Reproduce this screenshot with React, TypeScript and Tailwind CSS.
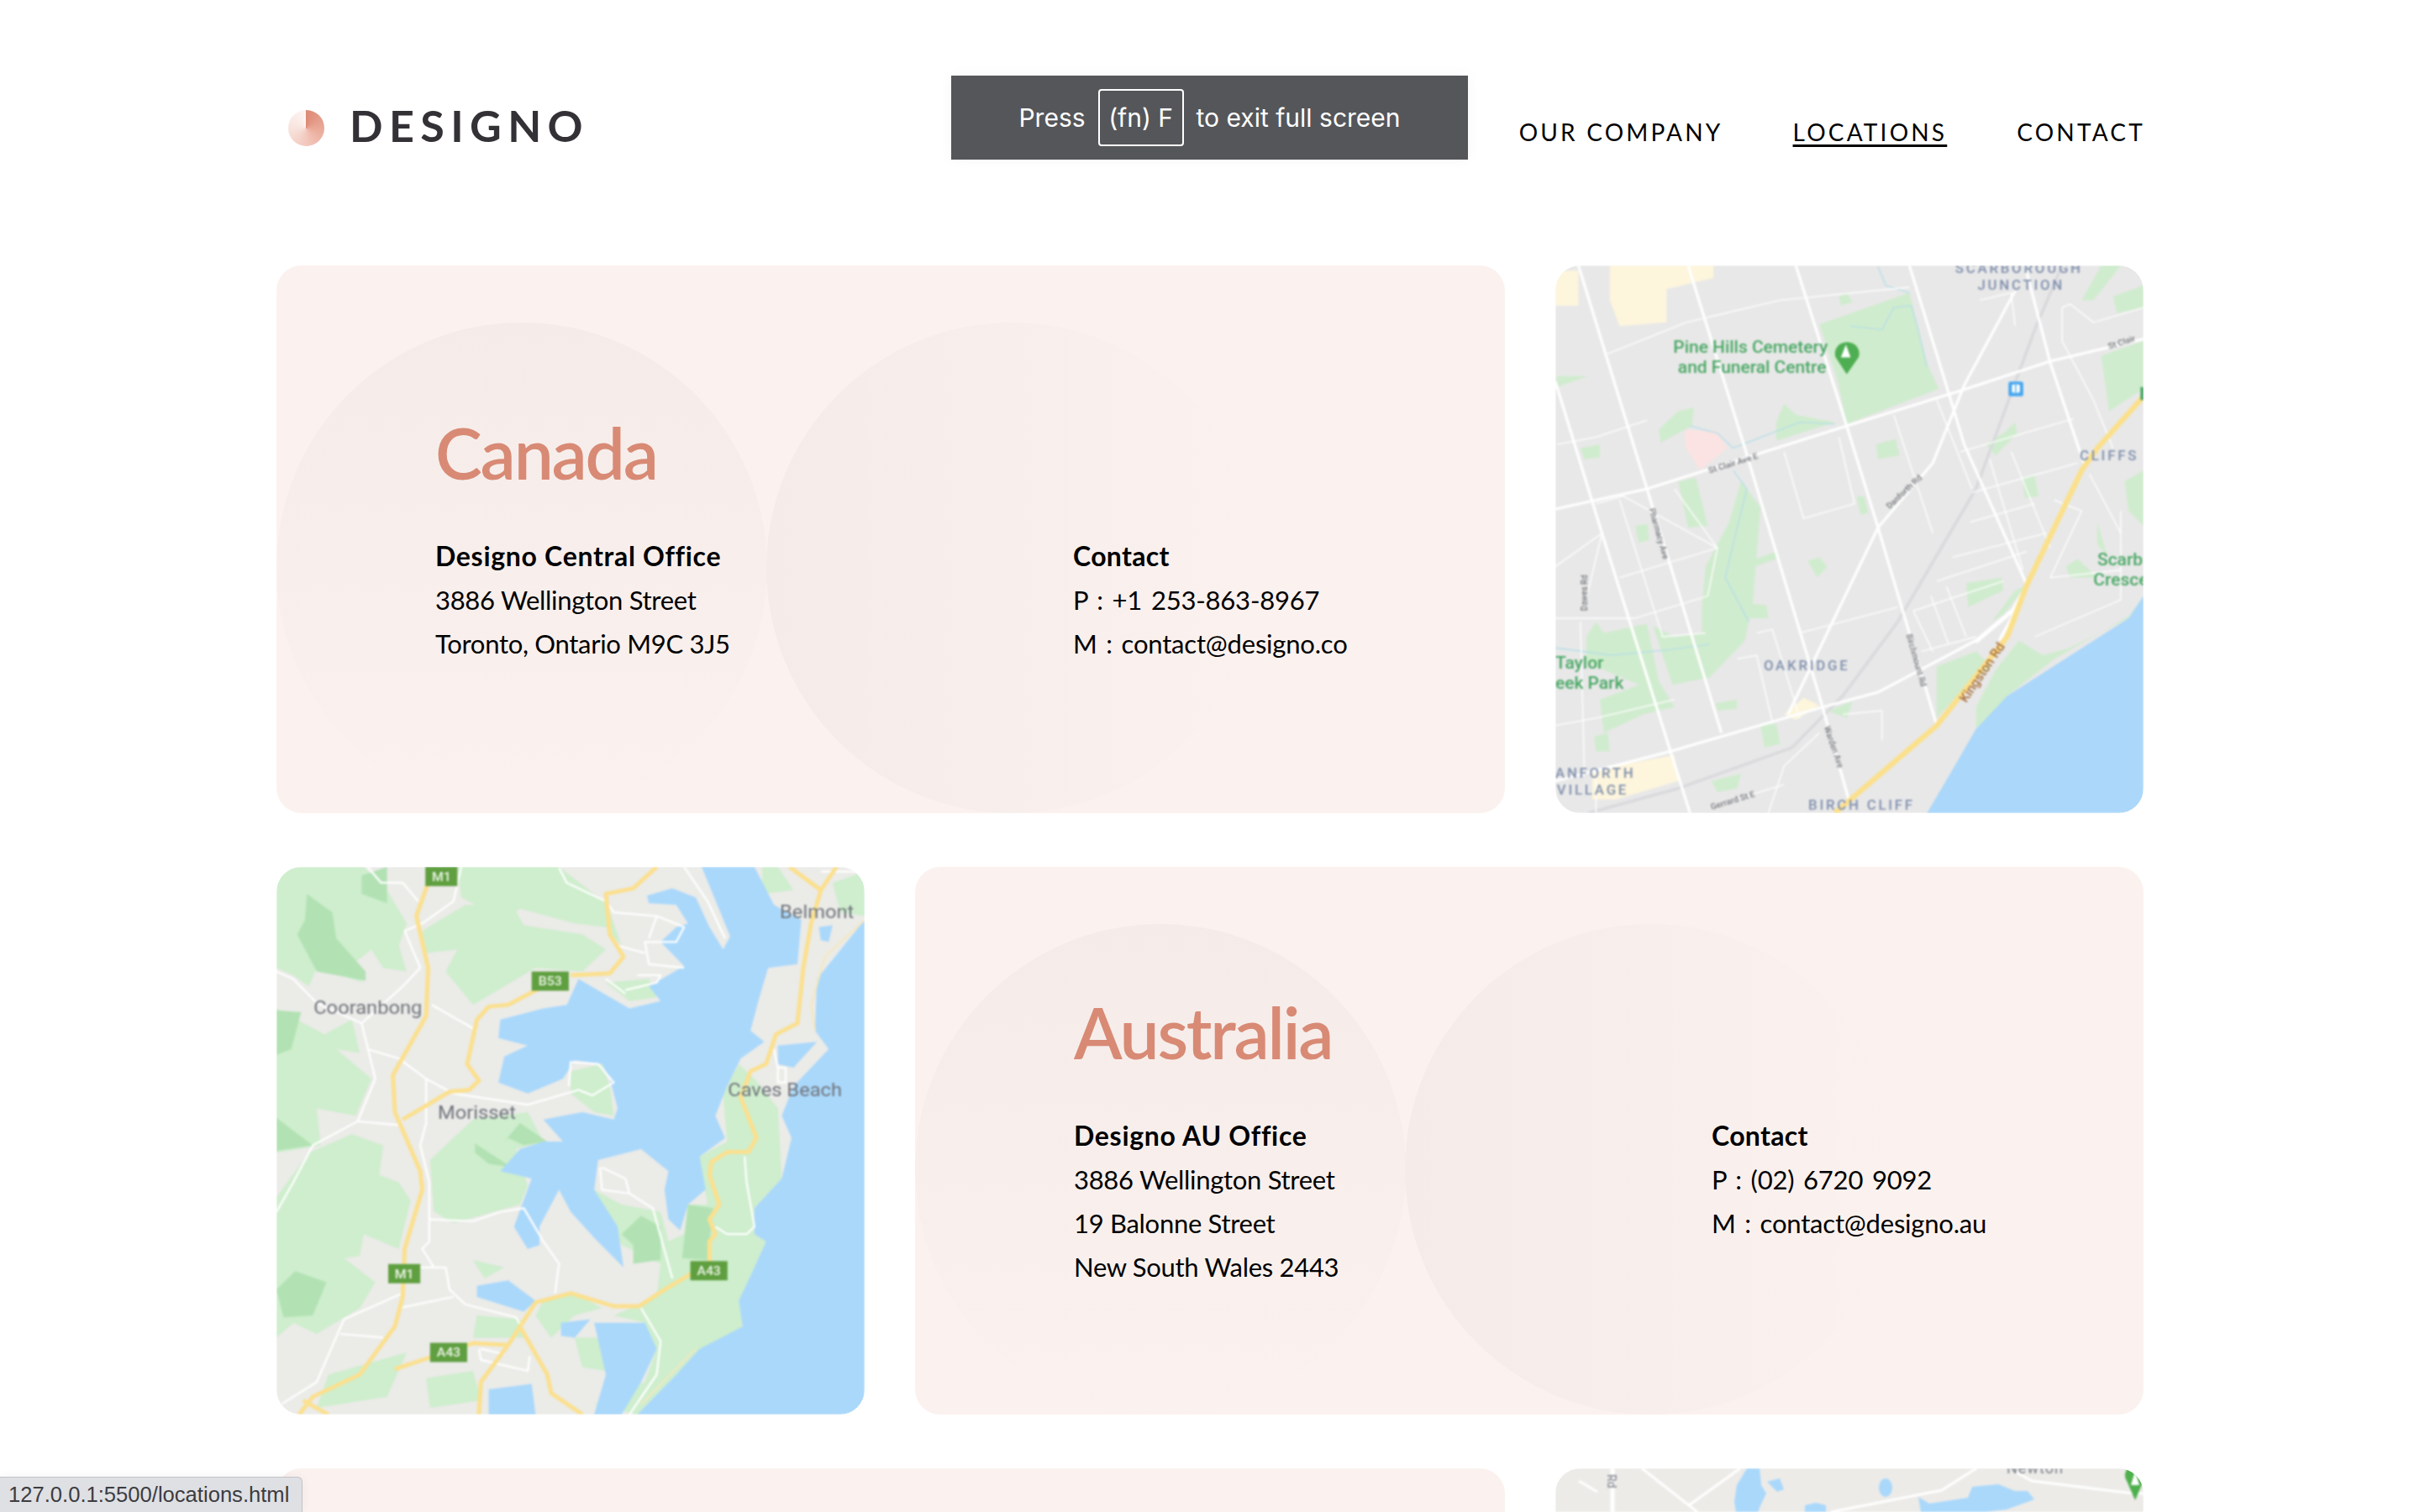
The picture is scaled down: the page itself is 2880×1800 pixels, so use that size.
const lato = "font-['Lato','Liberation_Sans',sans-serif]";

function CanadaMap() {
  const thick = "M26 695L260 640L770 470L1060 375L1290 295L1528 235M85 36L260 640L450 1300M26 350L145 760L320 1350L370 1517M365 36L510 530L700 1200L775 1480M640 36L770 470L850 745L1000 1280M930 36L1030 380L1070 520L1230 900M1225 36L1290 300L1375 570M1200 105L1070 360L990 570L850 745L620 1250M26 1430L320 1350L710 1230L850 1190L1100 1050L1190 970";
  const thin = "M160 275L360 190L600 130L930 95M30 520L130 500L260 455M130 680L200 660L440 800L190 880M330 640L440 800L415 930L230 990M190 670L300 1040L410 1030M26 990L230 990M26 1280L130 1260L330 1210M540 1030L580 1020L650 1260M490 1100L540 1090L580 1270M610 540L660 720L790 680L750 500M650 1030L900 960M890 440L990 760M1000 400L1090 640M1110 130L1190 110L1200 200M1320 150L1340 140L1400 190L1528 150M1320 150L1320 240L1400 400L1450 530M1135 560L1220 860M1190 540L1290 800M1060 540L1350 450M1090 650L1360 570M1085 730L1250 680M1040 825L1280 760M1000 890L1230 810M940 970L1170 890M960 1080L1100 1040M940 970L990 1080M985 930L1030 1060M1025 905L1075 1040M1300 670L1370 700L1290 880M1290 880L1470 860M1470 700L1470 940L1250 1040M1390 600L1470 760M760 1250L860 1240L860 1320M700 1300L610 1390L570 1517M420 1500L610 1440M130 1517L130 1400M90 1000L100 1400M100 960L145 760M26 850L145 760";
  return (
    <svg viewBox="26 36 1502 1481" preserveAspectRatio="none" className="block h-full w-full blur-[1.2px]">
      <rect x="26" y="36" width="1502" height="1481" fill="#e8e8e8" />
      <path d="M26 50H85V145H26ZM165 36H430V70L310 100V190L190 200L165 130Z" fill="#fdf5dc" />
      <path d="M120 1400L330 1360L340 1430L180 1480H120ZM610 1250L660 1205L700 1225L640 1265Z" fill="#fdf5dc" />
      <path d="M355 480L440 485L465 530L395 590L360 530Z" fill="#fbe3e3" />
      <g fill="#d0ecce">
        <path d="M700 195L930 110L975 300L1005 370L770 465L745 340Z" />
        <path d="M750 120L770 110L785 135L755 145Z" />
        <path d="M30 335L110 335L30 365Z" />
        <path d="M290 480L340 430L380 420L375 470L295 515Z" />
        <path d="M90 530L140 520L140 555L100 560Z" />
        <path d="M590 460L610 410L640 440L740 460L590 510Z" />
        <path d="M845 520L895 505L905 550L850 560Z" />
        <path d="M340 620L385 610L415 740L365 745Z" />
        <path d="M230 740L262 735L265 780L238 785Z" />
        <path d="M795 660L815 660L825 705L805 710Z" />
        <path d="M670 835L700 825L720 850L695 880Z" />
        <path d="M400 960L410 850L470 730L500 620L550 690L530 950L510 1050L420 1150L325 1170L275 1010L330 1040L400 1030Z" />
        <path d="M480 850L590 810L590 830L480 870Z" />
        <path d="M525 950L565 955L570 990L520 990Z" />
        <path d="M105 1040L130 1000L150 1030L260 1005L290 1160L330 1230L250 1250L150 1300L140 1210L240 1170L105 1110Z" />
        <path d="M125 1310L160 1300L165 1350L130 1350Z" />
        <path d="M435 1220L490 1210L490 1235L440 1240Z" />
        <path d="M550 1280L590 1275L600 1330L560 1340Z" />
        <path d="M720 1240L785 1215L770 1260Z" />
        <path d="M425 1430L500 1410L490 1450L440 1460Z" />
        <path d="M1370 130L1420 36H1470L1400 130ZM1450 120L1528 90V150L1460 165Z" />
        <path d="M1420 280L1528 240V370L1440 430Z" />
        <path d="M1125 520L1170 490L1200 460L1205 490L1150 550Z" />
        <path d="M1218 610L1250 605L1260 660L1225 665Z" />
        <path d="M1075 895L1165 880L1170 915L1080 960Z" />
        <path d="M1480 620L1528 590V740L1490 700Z" />
        <path d="M1410 730L1435 820L1410 790Z" />
        <path d="M1330 850L1360 830L1410 880L1340 880Z" />
        <path d="M1140 1000L1200 915L1230 900L1170 980Z" />
        <path d="M1000 1120L1100 1080L1140 1120L1060 1190L1000 1260Z" />
        <path d="M1150 1130L1210 1050L1270 1090L1340 1070L1490 990L1528 930L1490 985L1300 1100L1180 1200L1140 1260L1100 1290L1100 1230Z" />
      </g>
      <path d="M26 1070L170 1090L320 1075L420 1060M370 470L440 490L480 530L650 460L740 465M480 590L515 640L480 790L460 880L520 1000M780 200L860 210L890 150L935 145L950 200L975 310M850 40L870 90L930 110" fill="none" stroke="#b5dfe8" strokeWidth="3" />
      <path d="M1320 36L1250 210L1100 640L900 1000L760 1200L630 1340L340 1450L110 1517" fill="none" stroke="#dadade" strokeWidth="8" />
      <path d="M1528 930L1490 990L1180 1200L1100 1290L1040 1400L975 1517H1528Z" fill="#aad7fa" />
      <path d={thin} fill="none" stroke="#fff" strokeWidth="3" />
      <path d={thick} fill="none" stroke="#fff" strokeWidth="7" />
      <path d="M1100 1055L1190 975L1230 900M1160 1050L1220 935" fill="none" stroke="#fff" strokeWidth="8" />
      <path d="M1528 390L1410 530L1370 590L1230 900L1180 1040L1000 1280L780 1480L740 1517" fill="none" stroke="#fbe08c" strokeWidth="14" />
      <g fontFamily="Roboto, sans-serif" fontWeight="500">
        <g fill="#8090ae" fontSize="36" letterSpacing="6">
          <text x="1047" y="56">SCARBOROUGH</text>
          <text x="1104" y="102">JUNCTION</text>
          <text x="1365" y="562">CLIFFS</text>
          <text x="558" y="1132">OAKRIDGE</text>
          <text x="26" y="1422">ANFORTH</text>
          <text x="30" y="1468">VILLAGE</text>
          <text x="672" y="1508">BIRCH CLIFF</text>
        </g>
        <g fill="#4aa865" fontSize="45">
          <text x="327" y="273">Pine Hills Cemetery</text>
          <text x="339" y="327">and Funeral Centre</text>
          <text x="26" y="1126">Taylor</text>
          <text x="26" y="1180">eek Park</text>
          <text x="1410" y="847">Scarb</text>
          <text x="1400" y="901">Cresce</text>
        </g>
        <g fill="#72757a" fontSize="22">
          <text transform="translate(420 598) rotate(-18)">St Clair Ave E</text>
          <text transform="translate(1440 262) rotate(-18)">St Clair</text>
          <text transform="translate(880 695) rotate(-45)">Danforth Rd</text>
          <text transform="translate(265 695) rotate(75)">Pharmacy Ave</text>
          <text transform="translate(107 970) rotate(-90)">Dawes Rd</text>
          <text transform="translate(922 1035) rotate(75)">Birchmount Rd</text>
          <text transform="translate(712 1285) rotate(72)">Warden Ave</text>
          <text transform="translate(425 1508) rotate(-18)">Gerrard St E</text>
        </g>
        <text transform="translate(1075 1220) rotate(-57)" fill="#a8703e" fontSize="34">Kingston Rd</text>
      </g>
      <path d="M770 330L742 285A31 31 0 1 1 800 285Z" fill="#4eae52" />
      <path d="M768 250L780 285H755Z" fill="#fff" />
      <rect x="1183" y="350" width="38" height="40" rx="6" fill="#4aa8f0" />
      <rect x="1192" y="358" width="20" height="22" rx="3" fill="#fff" />
      <rect x="1200" y="358" width="3" height="22" fill="#4aa8f0" />
      <rect x="1520" y="365" width="8" height="35" fill="#4aa865" />
    </svg>
  );
}

function AustraliaMap() {
  const shield = (x: number, y: number, w: number, t: string) => (
    <g>
      <rect x={x} y={y} width={w} height="52" fill="#5f9f40" />
      <text x={x + w / 2} y={y + 38} textAnchor="middle" fill="#eef5e8" fontSize="34" fontWeight="500">{t}</text>
    </g>
  );
  return (
    <svg viewBox="17 27 1505 1481" preserveAspectRatio="none" className="block h-full w-full blur-[1.2px]">
      <rect x="17" y="27" width="1505" height="1481" fill="#ebebe8" />
      <g fill="#ceeecd">
        <path d="M17 27H240L300 90L350 180L330 240L350 310L290 300L260 250L200 300L240 340L120 300L100 350L60 320L17 300Z" />
        <path d="M390 200L500 130L620 130L650 185L800 210L860 250L800 310L680 300L520 400L450 310L480 250L400 260Z" />
        <path d="M480 27H740L830 100L860 120L900 240L860 190L780 180L640 140L600 170L490 110Z" />
        <path d="M17 410L140 480L210 440L230 530L170 520L260 600L220 700L120 680L130 780L17 800Z" />
        <path d="M17 920L100 800L210 750L290 780L280 860L330 880L360 930L330 1060L240 1020L230 1080L190 1085L270 1150L230 1220L120 1290L60 1260L17 1300Z" />
        <path d="M410 820L520 710L660 690L700 770L630 790L660 890L640 940L470 990L420 960Z" />
        <path d="M770 580L850 560L870 620L880 700L830 690L770 640Z" />
        <path d="M860 340L970 330L990 380L920 390Z" />
        <path d="M1000 530L1020 520L1065 580L1040 590Z" />
        <path d="M960 620L1015 730L990 800L950 790Z" />
        <path d="M1110 410L1130 400L1145 465L1115 475Z" />
        <path d="M830 900L900 940L1000 960L1020 1040L1060 1020L1070 940L1120 940L1100 810L1170 770L1160 640L1200 560L1240 600L1300 680L1310 870L1240 950L1240 1020L1270 1040L1240 1110L1200 1200L1210 1270L1040 1400L940 1508L830 1480L960 1420L990 1330L960 1260L880 1240L990 1190L1000 1100L900 1050Z" />
        <path d="M700 1200L780 1180L850 1220L780 1240L720 1300L680 1240Z" />
        <path d="M780 1300L850 1300L860 1390L800 1380Z" />
        <path d="M400 1410L520 1390L540 1470L410 1490Z" />
        <path d="M150 1400L350 1340L300 1460L120 1490Z" />
        <path d="M530 1240L640 1250L660 1300L520 1300Z" />
        <path d="M1260 27H1300L1340 90L1260 100ZM1440 70L1522 40V160L1460 150Z" />
        <path d="M520 1090L600 1110L550 1140Z" />
      </g>
      <g fill="#b2e2b4">
        <path d="M95 100L160 150L170 220L245 310L245 335L120 310L70 210L90 170Z" />
        <path d="M235 50L300 27V125L235 100Z" />
        <path d="M17 415L80 420L55 520L17 535Z" />
        <path d="M17 705L60 740L110 780L17 795Z" />
        <path d="M17 1170L65 1120L145 1150L110 1240L35 1245Z" />
        <path d="M600 770L640 720L710 770L650 780L610 760Z" />
        <path d="M525 775L620 840L560 830L525 800Z" />
        <path d="M900 1020L950 970L1000 1000L1000 1090L930 1100L930 1050Z" />
        <path d="M1070 940L1135 950L1120 1090L1055 1085Z" />
      </g>
      <g fill="#aad8fb">
        <path d="M1105 27H1240L1290 130L1360 170L1350 290L1275 300L1250 390L1230 470L1265 500L1205 545L1170 620L1140 700L1165 760L1100 810L1115 900L1070 940L1050 1010L1020 980L1010 900L1020 850L950 790L840 820L830 900L890 1000L905 1110L830 1030L770 960L740 900L690 1000L690 1050L660 1060L625 1000L670 870L590 850L640 790L700 770L750 770L700 710L800 690L880 710L890 680L870 600L850 560L780 550L750 600L660 640L585 610L600 540L660 510L585 490L590 440L700 410L760 400L790 330L920 410L1000 390L970 350L1060 295L1000 230L1040 190L1070 180L1040 130L970 125L965 105L1030 85L1090 110L1125 190L1160 250L1178 215Z" />
        <path d="M1522 170L1400 330L1395 470L1430 520L1340 620L1310 700L1335 760L1310 870L1240 950L1240 1020L1270 1040L1240 1110L1200 1200L1210 1270L1100 1330L1040 1400L940 1508H1522Z" />
        <path d="M830 1260H960L990 1330L950 1420L900 1508H830L860 1400Z" />
        <path d="M530 1160L610 1145L680 1200L650 1230L530 1190Z" />
        <path d="M560 1440L670 1425L680 1508H560Z" />
        <path d="M745 1260L820 1250L780 1300L745 1295Z" />
        <path d="M1405 190L1440 185L1430 230L1410 225Z" />
        <path d="M1300 510L1400 500L1340 570L1300 560Z" />
        <path d="M625 1000L660 975L690 1040L660 1060Z" />
      </g>
      <path d="M1522 170L1420 270L1385 400L1395 470" fill="none" stroke="#f5e8c0" strokeWidth="5" />
      <path d="M1090 1330L950 1480" fill="none" stroke="#f5e8c0" strokeWidth="4" />
      <path d="M250 27L285 70L340 70L380 120M490 27L470 120L390 180L345 200L385 300L340 350L235 450L270 600L225 715L110 780L60 880L17 960M17 310L60 330L120 395L235 450M415 400L530 470M250 520L330 545L400 600L470 640L660 670L790 630L825 645L880 610L840 560L770 555L765 620M225 715L330 725M400 600L400 720L385 780L408 880L408 1040L390 1060L420 1110H450L460 1170L500 1210L630 1245L660 1300M408 980L520 985L590 960L650 950L700 1040L740 1100L730 1180M340 1110L420 1110M340 1180L190 1250L120 1420L30 1480M180 1290L290 1300M330 1220L470 1190M740 30L760 70L860 120L880 150L990 160L1060 190L1040 230L960 230L970 290L1060 300M890 240L960 260M990 160L970 220M940 320L1000 320L990 340L910 360M860 330L910 370M850 840L910 870L920 910L850 900L845 840M920 910L980 950L1030 1140M950 1220L1000 1310L990 1400L920 1508M1060 27L1120 120L1165 220M1215 810L1220 880L1240 1000L1220 1020L1170 1020L1140 1000M1290 520L1300 570H1320V610H1300V570M540 1330L600 1345M535 1330L540 1360L660 1390L665 1350M1410 40L1522 40" fill="none" stroke="#fff" strokeWidth="5" strokeLinejoin="round" />
      <path d="M415 40L375 160L405 300L400 430L315 590L320 690L385 850L390 900L345 1060L340 1190L320 1270L230 1400L110 1460L75 1508M85 1470L150 1508M320 1385L420 1350L520 1315L610 1320L680 1205L770 1180L880 1215L945 1215L1010 1170L1090 1120M610 1320L540 1420L535 1508M640 1270L710 1400L720 1450L800 1508M340 710L460 635L510 630L535 605L505 560L530 440L560 405L610 400L700 350M770 320L870 315L905 270L870 210L860 100L930 85L990 27M1125 1100L1125 1040L1140 1020L1125 980L1150 940L1125 860L1130 825L1170 798L1225 798L1245 760L1205 650L1230 580L1270 560L1295 480L1350 450L1365 300L1385 180L1410 90L1450 27M1410 90L1330 27" fill="none" stroke="#fbe08f" strokeWidth="11" strokeLinejoin="round" />
      <g fontFamily="Roboto, sans-serif">
        {shield(398, 27, 82, "M1")}
        {shield(670, 310, 95, "B53")}
        {shield(303, 1101, 82, "M1")}
        {shield(1076, 1093, 95, "A43")}
        {shield(410, 1314, 95, "A43")}
        <g fill="#70747c" fontSize="51">
          <text x="112" y="425">Cooranbong</text>
          <text x="430" y="708">Morisset</text>
          <text x="1172" y="647">Caves Beach</text>
          <text x="1305" y="166">Belmont</text>
        </g>
      </g>
    </svg>
  );
}

function ThirdMap() {
  return (
    <svg viewBox="0 0 700 52" className="block h-[52px] w-full blur-[1px]">
      <rect width="700" height="52" fill="#ecebe8" />
      <path d="M28 15L50 28M103 0L169 52M159 44L220 0M501 0L460 26L328 52M549 5L567 15L680 29L700 30" fill="none" stroke="#fff" strokeWidth="3" />
      <path d="M68 0V52" stroke="#fff" strokeWidth="5" />
      <g fill="#aad8fb">
        <path d="M228 0H243L245 20L251 30L246 40L241 52H215L213 40L216 20Z" />
        <path d="M252 16L267 12L272 25L264 28Z" />
        <ellipse cx="393" cy="23" rx="8" ry="11" />
        <path d="M297 52V44L310 41L322 44V52Z" />
        <path d="M432 34L445 42L491 35L496 22L527 19L547 27L562 27L570 37L537 49L511 52H435Z" />
      </g>
      <text transform="translate(62 7) rotate(90)" fill="#8a8f96" fontSize="14" fontFamily="Roboto, sans-serif" fontWeight="500">Rd</text>
      <text x="537" y="6" fill="#7d828c" fontSize="18" letterSpacing="1" fontFamily="Roboto, sans-serif">Newton</text>
      <path d="M690 38L680 15A12 12 0 0 1 681 0H699A12 12 0 0 1 700 15Z" fill="#4eb04c" />
      <path d="M690 3L695 20H685Z" fill="#fff" />
    </svg>
  );
}

function Card({ title, office, address, contact }: { title: string; office: string; address: string[]; contact: string[] }) {
  return (
    <div className="relative flex h-[652px] w-[1462px] flex-col justify-center overflow-hidden rounded-[30px] bg-[#fbf2ef] pl-[189px]">
      <div className="absolute left-0 top-[68px] h-[584px] w-[584px] rounded-full bg-gradient-to-b from-[#f5ece9] to-[#fbf2ef]" />
      <div className="absolute left-[583px] top-[68px] h-[584px] w-[584px] rounded-full bg-gradient-to-r from-[#f5ece9] to-[#fbf2ef]" />
      <h2 className="relative mb-[48px] h-[96px] text-[84px] font-semibold leading-[94px] tracking-[-2.2px] text-[#d88a75]">{title}</h2>
      <div className="relative flex text-[31px] leading-[52px] text-black">
        <div className="w-[759px]">
          <p className="text-[32px] font-bold tracking-[0.7px]">{office}</p>
          {address.map((line) => (
            <p key={line} className="tracking-[-0.3px]">{line}</p>
          ))}
        </div>
        <div>
          <p className="text-[32px] font-bold tracking-[0.3px]">Contact</p>
          {contact.map((line) => (
            <p key={line} className="tracking-[-0.2px] [word-spacing:3px]">{line}</p>
          ))}
        </div>
      </div>
    </div>
  );
}

export default function App() {
  return (
    <div className={`relative h-[1800px] overflow-hidden bg-white ${lato}`}>
      <div className="mx-auto w-[2222px]">
        <header className="flex h-[316px] items-start justify-between">
          <div className="ml-[14px] mt-[128px] flex items-center">
            <div className="h-[43px] w-[43px] rounded-full bg-[conic-gradient(#dd8a75,#eaa897_90deg,#f2c8bd_180deg,#f8e4de_270deg,#fdf6f4)]" />
            <span className="mb-[5px] ml-[30px] text-[52px] font-bold leading-[43px] tracking-[7.4px] text-[#333136]">DESIGNO</span>
          </div>
          <nav className="-mr-[2px] mt-[137px] flex gap-[83px] text-[28px] leading-[40px] tracking-[3.2px] text-black">
            <a>OUR COMPANY</a>
            <a className="underline decoration-[3px] underline-offset-[4px]">LOCATIONS</a>
            <a>CONTACT</a>
          </nav>
        </header>
        <div className="flex flex-col gap-[64px]">
          <div className="flex justify-between">
            <Card title="Canada" office="Designo Central Office" address={["3886 Wellington Street", "Toronto, Ontario M9C 3J5"]} contact={["P : +1 253-863-8967", "M : contact@designo.co"]} />
            <div className="h-[652px] w-[700px] overflow-hidden rounded-[30px]"><CanadaMap /></div>
          </div>
          <div className="flex justify-between">
            <div className="h-[652px] w-[700px] overflow-hidden rounded-[30px]"><AustraliaMap /></div>
            <Card title="Australia" office="Designo AU Office" address={["3886 Wellington Street", "19 Balonne Street", "New South Wales 2443"]} contact={["P : (02) 6720 9092", "M : contact@designo.au"]} />
          </div>
          <div className="flex justify-between">
            <div className="h-[652px] w-[1462px] rounded-[30px] bg-[#fbf2ef]" />
            <div className="h-[652px] w-[700px] overflow-hidden rounded-[30px]"><ThirdMap /></div>
          </div>
        </div>
      </div>

      <div className="absolute left-[1132px] top-[90px] flex h-[100px] w-[615px] items-center justify-center gap-[15px] bg-[#55565a] font-['Inter',sans-serif] text-[30px] text-white shadow-[0_0_16px_rgba(0,0,0,0.04)]">
        <span>Press</span>
        <span className="flex h-[68px] w-[102px] items-center justify-center rounded-[4px] border-2 border-white">(fn) F</span>
        <span>to exit full screen</span>
      </div>

      <div className="absolute bottom-0 left-0 flex h-[42px] w-[360px] items-center rounded-tr-[6px] border-r border-t border-[#c2c3c7] bg-[#dfe0e4] pl-[10px] font-['Liberation_Sans',sans-serif] text-[25.6px] text-[#3c3c40] shadow-[0_0_12px_rgba(0,0,0,0.05)]">
        127.0.0.1:5500/locations.html
      </div>
    </div>
  );
}
